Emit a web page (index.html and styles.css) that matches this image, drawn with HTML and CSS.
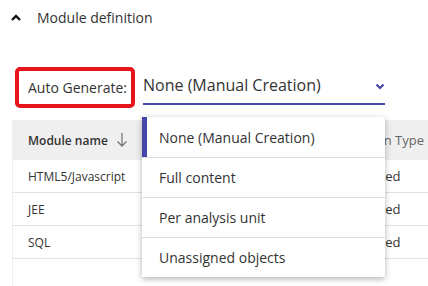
FILE: index.html
```html
<!DOCTYPE html>
<html lang="en">
<head>
    <meta charset="UTF-8">
    <meta name="viewport" content="width=device-width, initial-scale=1.0">
    <title>Module definition</title>
    <link rel="stylesheet" href="styles.css">
</head>
<body>
    <div class="page">
        <div class="section-header">
            <svg class="chevron-up" width="10" height="7" viewBox="0 0 10 7">
                <path d="M1 6 L5 2 L9 6" fill="none" stroke="#111" stroke-width="2.4"/>
            </svg>
            <span class="section-title">Module definition</span>
        </div>

        <div class="field-row">
            <div class="field-label">Auto Generate:</div>
            <div class="select-wrap">
                <div class="select">
                    <span class="select-value">None (Manual Creation)</span>
                    <svg class="chevron-down" width="10" height="7" viewBox="0 0 10 7">
                        <path d="M1.5 1.5 L5 5 L8.5 1.5" fill="none" stroke="#4646a8" stroke-width="2.2"/>
                    </svg>
                </div>
                <ul class="menu">
                    <li class="menu-item selected">None (Manual Creation)</li>
                    <li class="menu-item">Full content</li>
                    <li class="menu-item">Per analysis unit</li>
                    <li class="menu-item">Unassigned objects</li>
                </ul>
            </div>
        </div>

        <div class="table">
            <div class="row head">
                <div class="cell name">Module name
                    <svg class="sort" width="12" height="16" viewBox="0 0 12 16">
                        <path d="M6 1 V14 M1.5 9.5 L6 14 L10.5 9.5" fill="none" stroke="#777" stroke-width="1.3"/>
                    </svg>
                </div>
                <div class="cell"></div>
                <div class="cell">Creation Type</div>
            </div>
            <div class="row">
                <div class="cell name">HTML5/Javascript</div>
                <div class="cell"></div>
                <div class="cell">Generated</div>
            </div>
            <div class="row">
                <div class="cell name">JEE</div>
                <div class="cell"></div>
                <div class="cell">Generated</div>
            </div>
            <div class="row">
                <div class="cell name">SQL</div>
                <div class="cell"></div>
                <div class="cell">Generated</div>
            </div>
        </div>
    </div>
</body>
</html>
```

FILE: styles.css
```css
* {
    margin: 0;
    padding: 0;
    box-sizing: border-box;
}

body {
    font-family: 'Open Sans', 'Noto Sans', sans-serif;
    color: #333;
    background-color: #fff;
    overflow: hidden;
}

.page {
    width: 428px;
    height: 286px;
}

/* Section header */
.section-header {
    display: flex;
    align-items: center;
    height: 34px;
    padding-left: 11px;
}

.chevron-up {
    margin-right: 16px;
}

.section-title {
    font-size: 14px;
    color: #333;
}

/* Auto generate field */
.field-row {
    display: flex;
    align-items: flex-start;
    margin-top: 33px;
    margin-left: 15px;
}

.field-label {
    height: 41px;
    border: 4px solid #e8141b;
    border-radius: 5px;
    padding: 0 4px 0 9px;
    display: flex;
    align-items: center;
    font-size: 14px;
    color: #333;
}

.select-wrap {
    position: relative;
    margin-left: 8px;
}

.select {
    width: 242px;
    height: 38px;
    border-bottom: 2px solid #4646a8;
    display: flex;
    align-items: center;
    justify-content: space-between;
    padding: 0;
    font-size: 16px;
    color: #333;
}

.chevron-down {
    margin-top: 2px;
}

.menu {
    position: absolute;
    top: 50px;
    left: -1px;
    width: 243px;
    list-style: none;
    background-color: #fff;
    box-shadow: 0 2px 6px rgba(0, 0, 0, 0.3);
    z-index: 2;
}

.menu-item {
    height: 40px;
    display: flex;
    align-items: center;
    padding-left: 17px;
    font-size: 14px;
    color: #333;
    border-top: 1px solid #ddd;
}

.menu-item:first-child {
    border-top: none;
}

.menu-item.selected {
    box-shadow: inset 5px 0 0 #4646a8;
}

/* Table */
.table {
    margin-top: 12px;
    margin-left: 12px;
    border-left: 1px solid #eee;
    height: 166px;
    width: 430px;
}

.row {
    display: grid;
    grid-template-columns: 150px 162px 1fr;
    height: 33px;
    border-bottom: 1px solid #e3e3e3;
    font-size: 12px;
    align-items: center;
}

.row.head {
    height: 40px;
    background-color: #efefef;
    border-bottom: none;
    font-weight: 600;
    color: #333;
}

.row.head .cell:not(.name) {
    font-size: 13px;
    font-weight: 400;
    color: #666;
}

.row .cell:last-child {
    font-size: 13px;
    padding-left: 11px;
}

.row.head .cell:last-child {
    padding-left: 15px;
}

.cell {
    padding-left: 15px;
    white-space: nowrap;
}

.cell.name {
    display: flex;
    align-items: center;
    gap: 8px;
}
```
